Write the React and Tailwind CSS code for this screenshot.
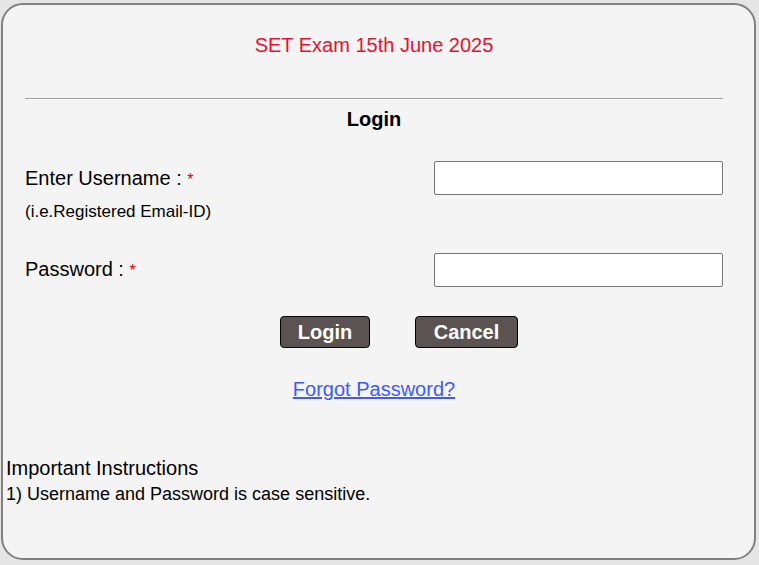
export default function App() {
  return (
    <div className="min-h-[565px] w-[759px] bg-[#e5e5e5] pt-[3px] pl-[1px] font-['Liberation_Sans',Arial,sans-serif] text-black">
      <div className="w-[755px] h-[557px] border-2 border-[#808080] rounded-[22px] bg-[#f4f4f4]">
        <div className="ml-[22px] w-[698px]">
          <h1 className="pt-[29px] text-center text-[20px] leading-[23px] text-[#e8102e]">
            SET Exam 15th June 2025
          </h1>
          <div className="mt-[41px] border-t border-[#a0a0a0] border-b border-b-white"></div>
          <h2 className="mt-[8px] text-center text-[20px] leading-[23px] font-bold">Login</h2>

          <div className="mt-[30px] flex justify-between">
            <div className="pt-[6px]">
              <div className="text-[20px] leading-[23px]">
                Enter Username : <span className="text-[16px] text-[#e00000]">*</span>
              </div>
              <div className="mt-[11px] text-[17px] leading-[19px]">(i.e.Registered Email-ID)</div>
            </div>
            <input
              type="text"
              className="w-[289px] h-[34px] bg-white border border-[#767676] rounded-[2px] outline-none"
            />
          </div>

          <div className="mt-[32px] flex justify-between">
            <div className="pt-[5px] text-[20px] leading-[23px]">
              Password : <span className="text-[16px] text-[#e00000]">*</span>
            </div>
            <input
              type="password"
              className="w-[289px] h-[34px] bg-white border border-[#767676] rounded-[2px] outline-none"
            />
          </div>

          <div className="mt-[29px] flex pl-[255px] gap-[45px]">
            <button className="w-[90px] h-[32px] bg-[#5a5352] border border-black rounded-[4px] text-white font-bold text-[20px] leading-[23px]">
              Login
            </button>
            <button className="w-[103px] h-[32px] bg-[#5a5352] border border-black rounded-[4px] text-white font-bold text-[20px] leading-[23px]">
              Cancel
            </button>
          </div>

          <div className="mt-[30px] text-center">
            <a href="#" className="text-[20px] leading-[23px] text-[#3b5bfd] underline">
              Forgot Password?
            </a>
          </div>
        </div>

        <div className="mt-[54px] ml-[3px]">
          <div className="text-[20px] leading-[23px]">Important Instructions</div>
          <div className="mt-[4px] text-[18px] leading-[20px]">1) Username and Password is case sensitive.</div>
        </div>
      </div>
    </div>
  )
}
